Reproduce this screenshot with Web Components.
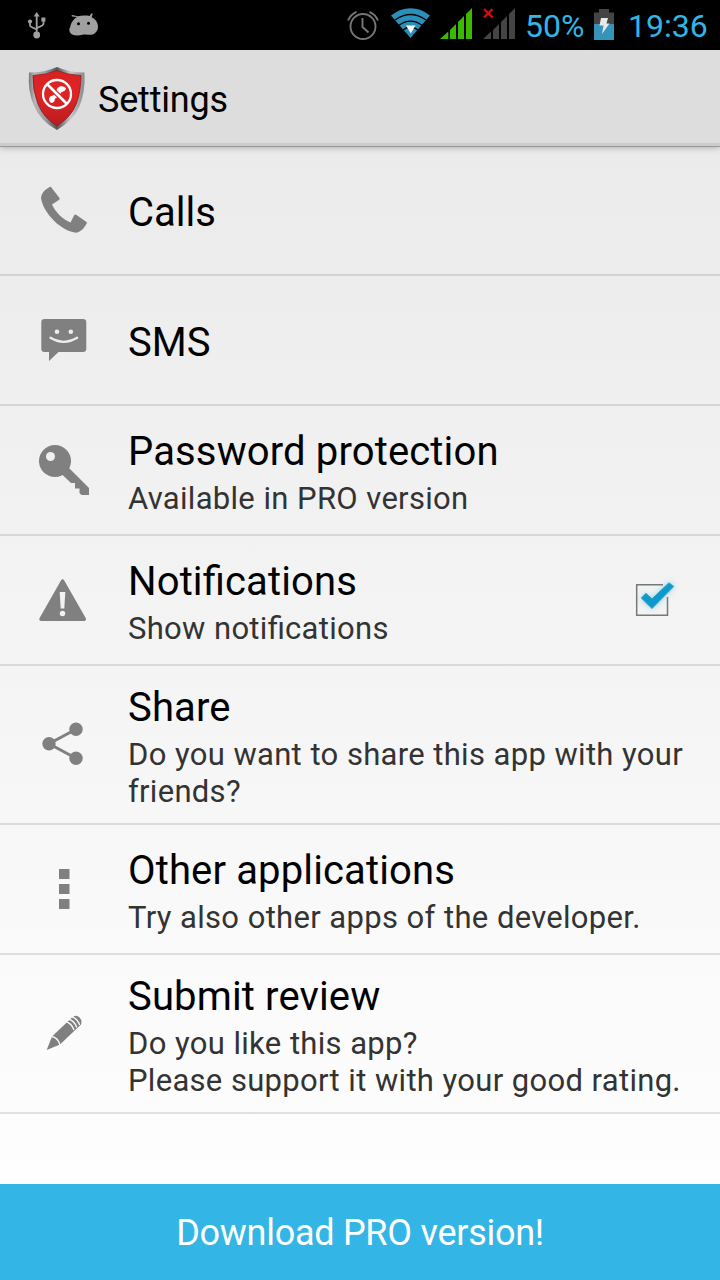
<!DOCTYPE html>
<html lang="en"><head><meta charset="utf-8"><title>Settings</title>
<style>html,body{margin:0;padding:0;height:100%}body{font-family:Roboto,sans-serif;overflow:hidden}</style></head>
<body>
<settings-screen></settings-screen>
<script>
const define=(name,html)=>customElements.define(name,class extends HTMLElement{
 constructor(){super();this.attachShadow({mode:'open'}).innerHTML=html;}
});

define('status-bar',`<style>
:host{display:flex;height:50px;background:#000;color:#33b5e5;font-size:32px;line-height:52px;white-space:pre}
svg{display:block;flex:none}
span{display:block;flex:none}
.pct{width:67px}.time{margin-left:8px}
</style>
<svg width="525" height="50" viewBox="0 0 525 50">
 <g fill="none" stroke="#a0a0a0" stroke-width="1.8"><path d="M36.7 15v20M30 21v4q0 1.5 1.5 2l5.200 2.500M43.500 19v4.500q0 1.300-1.300 2l-5.500 2.700"/></g>
 <g fill="#a0a0a0"><path d="M36.700 12l3 4.500h-6z"/><circle cx="36.700" cy="35" r="3.400"/><circle cx="30" cy="21.500" r="2.100"/><path d="M41.400 17.500h4v4h-4z"/></g>
 <path d="M70 28c.7-5 3.500-9 7-11l-5-.5-.5-1 .8-.5 5.500 1.200c3.500-.8 8-.9 12-.2l1.300-2.500 1.600.3-1 3.500c3.500 1.500 6 5 6.300 9 .2 4.500-3 8.200-6.600 8.400-3 .2-6-.7-9 .1-3 .8-6.500 1.300-9.500 0-3-1.300-3.900-3.300-3.500-6.600z" fill="#a0a0a0"/>
 <circle cx="78.500" cy="23.800" r="1.500"/><circle cx="88.500" cy="23.300" r="1.500"/>
 <g fill="none" stroke="#777" stroke-width="1.900"><circle cx="363" cy="26.500" r="12.500"/><path d="M362.500 18v9l6 5.500M348 20.500q2.500-6 8.500-8.700M378 20.500q-2.500-6-8.500-8.700"/></g>
 <path d="M410.500 38L391 15.500Q400 8.200 410.500 8.200T430 15.500z" fill="#2b8fba"/>
 <g fill="none" stroke="#000" stroke-width="1.300"><path d="M395 20q15.500-11 31 0M399 25.300q11.500-8.500 23 0M403 30q7.500-6 15 0"/></g>
 <path d="M406 25.500h9.500l-4.700 8z" fill="#fff"/>
 <path d="M440 39l8.300-7.500V39zM450 30l6-6v15h-6zM458 22l6-6v23h-6zM466 14l6-6v31h-6z" fill="#3db800"/>
 <path d="M483 39l8-7.500V39zM493 30l6-6v15h-6zM501 22l6-6v23h-6zM509 14l6-6v31h-6z" fill="#444"/>
 <path d="M484 9l8.500 8.500m0-8.500L484 17.500" stroke="#d01010" stroke-width="2.300"/>
</svg>
<span class="pct">50%</span>
<svg width="28" height="50" viewBox="592 0 28 50"><path d="M594 12.500h5V9h10v3.500h5V24h-20z" fill="#444"/><path d="M594 24h20v16h-20z" fill="#3594b9"/><path d="M601 18h7l-1.500 5.500h3L602 34l1.500-8.500h-4z" fill="#e8e8e8"/></svg>
<span class="time">19:36</span>`);

define('action-bar',`<style>
:host{display:flex;height:96px;box-sizing:border-box;background:#ddd;border-bottom:3px solid #ccc;box-shadow:0 1px 0 #999,0 2px 6px rgba(0,0,0,.25);position:relative;font-size:36px;line-height:100px;letter-spacing:-.2px;color:#000}
svg{display:block;flex:none}
</style>
<svg width="98" height="96" viewBox="0 50 98 96">
 <defs><linearGradient id="m" x1="0" x2="1"><stop offset="0" stop-color="#77787c"/><stop offset=".1" stop-color="#b4b5ba"/><stop offset=".3" stop-color="#9a9b9f"/><stop offset=".5" stop-color="#55565a"/><stop offset=".75" stop-color="#c5c6ca"/><stop offset="1" stop-color="#88898d"/></linearGradient>
 <linearGradient id="r" x2="0" y2="1"><stop offset="0" stop-color="#d92222"/><stop offset=".45" stop-color="#e02424"/><stop offset="1" stop-color="#b81c20"/></linearGradient></defs>
 <path d="M57 67q12 5.500 27.500 5.500 1 19.500-5 33.500T57 130q-16.500-9-23-24t-5-33.500Q45 72.500 57 67z" fill="url(#m)"/>
 <path d="M57 70.500q11 4.500 24 5-.2 16-4.800 28.500T57 126q-13.500-8-19-22t-5-28.500q13-.5 24-5z" fill="url(#r)" stroke="#8d1b1b" stroke-width=".8"/>
 <path d="M56 92.500Q56.500 87 60.500 86.300Q64.500 86 66 88.300Q65.500 91.500 61.500 92Q60.800 94.500 58 96.500Q56 98.500 54.800 98.700Q55 102.500 51.500 103Q48.500 101.500 49.200 98Q50 95.500 53 95.500z" fill="#fff"/>
 <path d="M48 85l18.500 18.500" stroke="#dc2424" stroke-width="5"/>
 <circle cx="57" cy="94" r="14" fill="none" stroke="#fff" stroke-width="2.300"/><path d="M47 84l20 20" stroke="#fff" stroke-width="2.500"/>
</svg><span><slot></slot></span>`);

define('setting-row',`<style>
:host{display:flex;height:128px;border-bottom:2px solid rgba(0,0,0,.11);--pad:22px;font-feature-settings:"liga" 1}
:host([tall]){height:157px;--pad:18px}
:host([single]){--pad:43px}
.icon{flex:none;width:128px;height:100%}
.txt{flex:1;min-width:0;padding-top:var(--pad);white-space:nowrap}
.t{font-size:40px;line-height:48px;letter-spacing:.14px;color:#000}
:host([single]) .t{letter-spacing:0}
.s{font-size:31px;line-height:37px;letter-spacing:.29px;word-spacing:.4px;margin-top:4px;color:#333;white-space:pre}
::slotted(svg){display:block}
</style><div class="icon"><slot name="icon"></slot></div><div class="txt"><div class="t"><slot></slot></div><div class="s"><slot name="summary"></slot></div></div><slot name="end"></slot>`);

define('check-box',`<style>:host{display:block;width:104px}svg{display:block}</style>
<svg width="104" height="128" viewBox="616 536 104 128"><defs><filter id="g" x="-50%" y="-50%" width="200%" height="200%"><feGaussianBlur stdDeviation="3"/></filter></defs>
<path d="M663 584.700h-26.300v30.600h30.800V597" fill="none" stroke="#777" stroke-width="1.500"/>
<path d="M641 598l4-4.500 7 6 17.500-17.500 4.500 4.500-22 22z" fill="#33b5e5" opacity=".6" filter="url(#g)"/>
<path d="M641.300 598l4.600-4.700 6.100 5.500 17-16 4.700 3.700-21.700 22z" fill="#0c99cc" stroke="#4a9cbc" stroke-width="1"/></svg>`);

define('download-bar',`<style>:host{display:flex;justify-content:center;height:96px;line-height:98px;background:#33b5e5;color:#fff;font-size:36px;letter-spacing:-.27px}</style><span><slot></slot></span>`);

define('settings-screen',`<style>
:host{display:flex;flex-direction:column;width:720px;height:1280px;background:linear-gradient(#e9e9e9 50px,#fff 1240px)}
main{flex:1}
</style>
<status-bar></status-bar><action-bar>Settings</action-bar>
<main>
<setting-row single><svg slot="icon" width="128" height="128" viewBox="0 146 128 128"><path d="M51 187L59.500 198q.5 1-.3 1.800L52 204.500c3.500 7.500 10 14.500 18.500 18l3.500-7q1-1.500 2.500-.6l10 7q.8 1-.1 2.200-4.500 8-10 8.600C62 232 43 213 41 198q0-6 8.500-11 1-.7 1.500 0z" fill="#808080"/></svg>Calls</setting-row>
<setting-row single><svg slot="icon" width="128" height="128" viewBox="0 276 128 128"><path d="M44.500 319h38.500q3.300 0 3.300 3.300v26.400q0 3.300-3.300 3.300H58.500L49 361v-9h-4.500q-3.200 0-3.200-3.300v-26.400q0-3.300 3.200-3.300z" fill="#808080"/><circle cx="57" cy="331.700" r="2.300" fill="#eee"/><circle cx="70.800" cy="331.700" r="2.300" fill="#eee"/><path d="M50.500 337.800q13.300 8 26.600 0" fill="none" stroke="#eee" stroke-width="2.300" stroke-linecap="round"/></svg>SMS</setting-row>
<setting-row><svg slot="icon" width="128" height="128" viewBox="0 406 128 128"><path d="M61.500 474l7.500-6 20 20v7h-7.500l-2-2v-4.500h-4.500V483h-4z" fill="#808080"/><circle cx="55" cy="461" r="16" fill="#808080"/><circle cx="50.500" cy="456.500" r="4.500" fill="#f0f0f0"/></svg>Password protection<span slot="summary">Available in PRO version</span></setting-row>
<setting-row><svg slot="icon" width="128" height="128" viewBox="0 536 128 128"><path d="M62.600 581l21.700 38.200H41z" fill="#808080" stroke="#808080" stroke-width="3.500" stroke-linejoin="round"/><path d="M59.700 592h5.600l-1 16.500h-3.600z" fill="#f2f2f2"/><circle cx="62.500" cy="613.500" r="2.700" fill="#f2f2f2"/></svg>Notifications<span slot="summary">Show notifications</span><check-box slot="end"></check-box></setting-row>
<setting-row tall><svg slot="icon" width="128" height="157" viewBox="0 666 128 157"><path d="M76 729.300L49 743.700l27 14.500" fill="none" stroke="#808080" stroke-width="3"/><g fill="#808080"><circle cx="76" cy="729.300" r="6.700"/><circle cx="49" cy="743.700" r="6.700"/><circle cx="76" cy="758.200" r="6.700"/></g></svg>Share<span slot="summary">Do you want to share this app with your
friends?</span></setting-row>
<setting-row><svg slot="icon" width="128" height="128" viewBox="0 825 128 128"><path d="M59 869h10.500v10H59zM59 884h10.500v10H59zM59 899h10.500v10H59z" fill="#808080"/></svg>Other applications<span slot="summary">Try also other apps of the developer.</span></setting-row>
<setting-row tall><svg slot="icon" width="128" height="157" viewBox="0 955 128 157"><path d="M46.700 1050l5.300-13.500 20.500-19.500q4-2.500 7 .5t1.500 7L60 1044.500z" fill="#808080"/><path d="M51.500 1036.500q6.500 1 8.500 8.500M65.500 1021.500q6 1.500 8.500 8.500M68.300 1019q6 1.500 8.500 8.500M71.200 1016.500q6 1.500 8.500 8.500" fill="none" stroke="#fafafa" stroke-width="1.300"/></svg>Submit review<span slot="summary">Do you like this app?
Please support it with your good rating.</span></setting-row>
</main>
<download-bar>Download PRO version!</download-bar>`);
</script></body></html>
